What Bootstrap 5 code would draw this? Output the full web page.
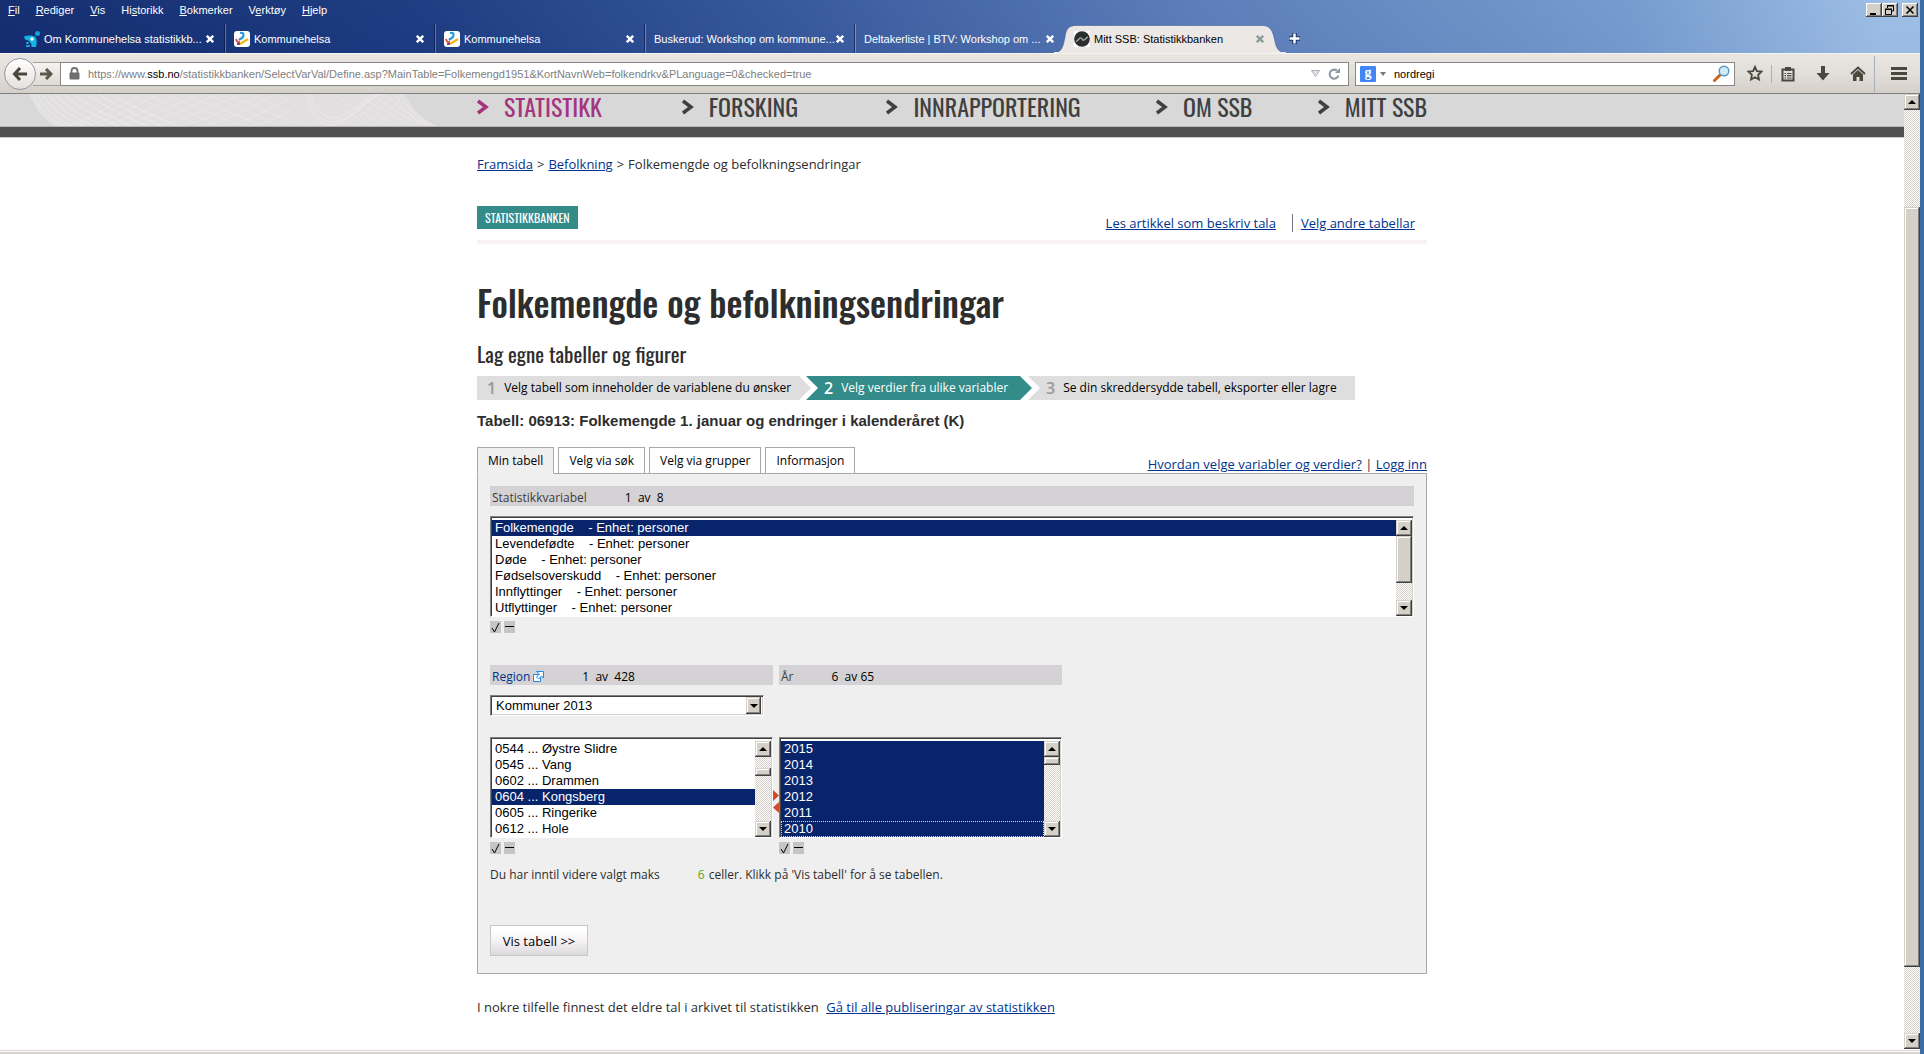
<!DOCTYPE html>
<html lang="nn">
<head>
<meta charset="utf-8">
<meta name="viewport" content="width=device-width, initial-scale=1">
<title>Mitt SSB: Statistikkbanken</title>
<link href="https://cdn.jsdelivr.net/npm/bootstrap@5.3.0/dist/css/bootstrap.min.css" rel="stylesheet">
<style>
  body { font-family: "Open Sans", "Noto Sans", sans-serif; font-size: 13px; line-height: 18px; color: #2d2d2d; background: #3a6ea5; padding-right: 4px; }
  a { color: #00338d; text-decoration: underline; }
  svg { display: block; flex: none; }
  button { border: 0; padding: 0; background: none; color: inherit; }

  /* browser frame */
  .frame-top { background: linear-gradient(175deg, rgba(255,255,255,.05), rgba(0,0,60,.08)), linear-gradient(98deg, #0a246a 0, #15367e 22%, #34579d 42%, #5b7fbc 62%, #7ba3d6 85%, #a6caf0 98%); font-family: "Liberation Sans", Arial, sans-serif; font-size: 11px; line-height: 14px; color: #fff; }
  .menu-row { height: 24px; padding: 3px 2px 0 8px; }
  .menu-row a { color: #fff; text-decoration: none; }
  .win-btn { width: 16px; height: 14px; background: #d4d0c8; box-shadow: inset -1px -1px #404040, inset 1px 1px #fff, inset -2px -2px #808080; }
  .tab-row { height: 29px; padding-left: 16px; }
  .tab-item { position: relative; width: 210px; padding: 0 11px 0 8px; height: 29px; border-right: 1px solid rgba(255,255,255,.3); box-shadow: inset -1px 0 rgba(0,0,40,.45); white-space: nowrap; }
  .tab-item.no-line { border-right-color: transparent; box-shadow: none; }
  .tab-item > * { position: relative; }
  .tab-current { color: #000; }
  .tab-current .tab-shape { position: absolute; left: -12px; top: 1px; }
  .tool-row { height: 41px; background: linear-gradient(#e9e6e2, #e2ded9 50%, #d4cfc9); border-top: 1px solid #f7f5f3; border-bottom: 1px solid #808080; padding: 0 13px 0 4px; font-family: "Liberation Sans", Arial, sans-serif; font-size: 11px; }
  .back-btn { width: 32px; height: 32px; border: 1px solid #8f97a3; border-radius: 50%; background: linear-gradient(#fff, #e4e1dd); z-index: 1; }
  .fwd-btn { width: 27px; height: 24px; margin-left: -3px; background: linear-gradient(#f6f4f2, #dedad5); border: 1px solid #a5a29e; border-width: 1px 0; }
  .field-box { height: 24px; background: #fff; border: 1px solid #868686; }
  .addr-text { color: #808080; white-space: nowrap; overflow: hidden; }
  .addr-text b { font-weight: 400; color: #000; }
  .find-box { width: 380px; margin-left: 6px; padding: 0 4px; }
  .find-box input { border: 0; outline: 0; padding: 0; font-size: 11px; color: #000; min-width: 0; }
  .g-tile { width: 16px; height: 16px; background: #4285f4; color: #fff; font: bold 14px/13px "Liberation Serif", serif; border-radius: 1px; }
  .tool-icons { padding-left: 12px; }
  .tool-sep { width: 1px; height: 18px; background: #aab0b8; }
  .tool-sep.tall { height: 36px; }

  /* scrollbars */
  .sbar { width: 16px; flex: none; background: repeating-conic-gradient(#fff 0 25%, #d4d0c8 0 50%) 0 0 / 2px 2px; }
  .sbar-btn, .sbar-thumb { background: #d4d0c8; box-shadow: inset -1px -1px #404040, inset 1px 1px #d4d0c8, inset -2px -2px #808080, inset 2px 2px #fff; }
  .sbar-btn { height: 16px; flex: none; display: flex; align-items: center; justify-content: center; }
  .tri-up, .tri-down { width: 0; height: 0; border: 4px solid transparent; }
  .tri-up { border-top: 0; border-bottom-color: #000; }
  .tri-down { border-bottom: 0; border-top-color: #000; }
  .grow-lead { flex: 97 0 0; } .grow-thumb { flex: 761 0 0; } .grow-tail { flex: 66 0 0; }
  .thumb-long { height: 47px; } .thumb-short { height: 8px; } .lead-short { height: 11px; }

  /* site */
  .site { background: #fff; }
  .site-head { background: #d8d8d8; height: 32px; position: relative; }
  .wave { position: absolute; left: 0; top: 0; }
  .head-rule { height: 12px; background: #505050; border-top: 1px solid #b8b8b8; border-bottom: 1px solid #c8c8c8; }
  .wrap { width: 100%; max-width: 950px; margin: 0 auto; }
  .main-nav a { font: 400 24px/25px Oswald, "Roboto Condensed", sans-serif; color: #404040; text-decoration: none; display: flex; gap: 15px; align-items: center; white-space: nowrap; }
  .main-nav a.chosen { color: #a5347f; }
  .nav-a { width: 205px; } .nav-b { width: 270px; } .nav-c { width: 162px; }
  .crumbs { padding-top: 17px; }
  .tag { background: #338c8a; color: #fff; font: 400 12px/23px Oswald, "Roboto Condensed", sans-serif; padding: 0 8px; }
  .head-line { height: 38px; border-bottom: 4px solid #f6f2f6; margin-top: 33px; }
  h1 { font: 500 36px/54px Oswald, "Roboto Condensed", sans-serif; margin: 31px 0 0; }
  h2 { font: 400 21px/30px Oswald, "Roboto Condensed", sans-serif; margin: 10px 0 7px; }
  .step { height: 24px; background: #dedede; color: #000; font-size: 12px; padding: 0 20px 0 10px; gap: 8px; white-space: nowrap; }
  .step b { font-size: 16px; font-weight: 600; color: #999; }
  .step-1 { width: 334px; clip-path: polygon(0 0, calc(100% - 12px) 0, 100% 50%, calc(100% - 12px) 100%, 0 100%); }
  .step-2 { width: 226px; margin-left: -5px; padding-left: 18px; background: #338c8a; color: #fff; clip-path: polygon(0 0, calc(100% - 12px) 0, 100% 50%, calc(100% - 12px) 100%, 0 100%, 12px 50%); }
  .step-2 b { color: #fff; }
  .step-3 { width: 327px; margin-left: -4px; padding-left: 18px; clip-path: polygon(0 0, 100% 0, 100% 100%, 0 100%, 12px 50%); }
  .table-name { font: bold 15px/20px "Liberation Sans", Arial, sans-serif; margin: 11px 0 16px; }
  .sheet-tabs { gap: 4px; margin-bottom: -1px; }
  .sheet-tab { border: 1px solid #a8a8a8; background: #fff; color: #000; font-size: 12px; height: 27px; padding: 0 10px; position: relative; }
  .sheet-tab.open { background: #efefef; border-bottom-color: #efefef; }
  .sheet { background: #efefef; border: 1px solid #a8a8a8; padding: 12px 12px 17px; }
  .var-head { background: #d4d2d4; height: 20px; font-size: 12px; padding: 3px 2px 0; color: #3c3c3c; display: flex; align-items: center; }
  .var-head output { color: #000; margin-left: 38px; white-space: pre; }
  .var-head a { text-decoration: none; display: flex; align-items: center; gap: 3px; }
  .lbox { height: 101px; border: 1px solid; border-color: #808080 #fff #fff #808080; box-shadow: inset 1px 1px #404040, inset -1px -1px #d4d0c8; padding: 3px 1px 0 1px; display: flex; background: #fff; }
  .lbox.first { margin-top: 10px; }
  .lbox select { flex: 1; min-width: 0; border: 0; outline: 0; padding: 0; height: 96px; overflow: hidden; font: 13px/16px "Liberation Sans", Arial, sans-serif; color: #000; background: #fff; border-radius: 0; scrollbar-width: none; }
  .lbox option { height: 16px; min-height: 16px; line-height: 16px; padding: 0 3px; }
  .lbox option:checked { background: #08246b linear-gradient(#08246b, #08246b); color: #fff; }
  .lbox option.cur { outline: 1px dotted #f3d99a; outline-offset: -1px; }
  .mini { width: 11px; height: 12px; background: #c6c4c6; display: flex; align-items: center; justify-content: center; }
  .minis { gap: 3px; margin-top: 4px; }
  .var-grid { display: grid; grid-template-columns: 283px 6px 283px; margin-top: 32px; }
  .combo { position: relative; width: 274px; height: 21px; margin: 10px 0 21px; border: 1px solid; border-color: #808080 #fff #fff #808080; box-shadow: inset 1px 1px #404040, inset -1px -1px #d4d0c8; padding: 2px 2px 2px 1px; display: flex; background: #fff; }
  .combo select { appearance: none; flex: 1; border: 0; background: none; padding: 0 4px; font: 13px/16px "Liberation Sans", Arial, sans-serif; color: #000; }
  .combo .sbar-btn { width: 15px; height: 17px; margin: -1px 0; pointer-events: none; }
  .swap { padding-top: 53px; }
  .note-line { font-size: 12px; margin-top: 12px; }
  .cells { color: #5fa50f; margin: 0 1px 0 38px; }
  .show-btn { margin-top: 41px; height: 31px; width: 98px; border: 1px solid #c6c6c6; background: linear-gradient(#fff 15%, #f6f2f6 50%, #dcdadc); color: #000; display: block; }
  .foot-strip { height: 5px; background: #d6d3ce; border-top: 1px solid #fff; box-shadow: inset 0 1px #d6d6ce, inset 0 2px #fff; }
</style>
</head>
<body class="d-flex flex-column min-vh-100">

<header class="frame-top">
  <div class="menu-row d-flex justify-content-between">
    <nav class="d-flex gap-3" aria-label="Meny">
      <a href="#"><u>F</u>il</a><a href="#"><u>R</u>ediger</a><a href="#"><u>V</u>is</a><a href="#">Hi<u>s</u>torikk</a><a href="#"><u>B</u>okmerker</a><a href="#">V<u>e</u>rktøy</a><a href="#"><u>H</u>jelp</a>
    </nav>
    <div class="d-flex">
      <button class="win-btn" aria-label="Minimer"><svg width="16" height="14"><path d="M4 10h6v2H4z"/></svg></button>
      <button class="win-btn" aria-label="Gjenopprett"><svg width="16" height="14" fill="none" stroke="#000"><path d="M5.500 5V2.500h6V8H10M5 3h7M3.500 6.500h6v5h-6zM3 6h7"/></svg></button>
      <button class="win-btn ms-1 me-0" aria-label="Lukk"><svg width="16" height="14" stroke="#000" stroke-width="1.600"><path d="M4.500 3.500l7 7m0-7l-7 7"/></svg></button>
    </div>
  </div>
  <div class="tab-row d-flex">
    <div class="tab-item d-flex align-items-center">
      <svg width="16" height="16" class="me-1"><path d="M0 5.500C4 4 9 4 11.500 6 13 8 13 12 12 16H7.500C8 12 5 9 1 8.500z" fill="#14b4e6"/><circle cx="13.500" cy="2.500" r="2.500" fill="#0fa0dc"/><circle cx="8" cy="8" r="1.700" fill="#fff"/><circle cx="3.500" cy="12" r="1.300" fill="#14b4e6"/><path d="M2 14h4v2H2z" fill="#0fa0dc"/></svg>
      <span>Om Kommunehelsa statistikkb...</span>
      <button class="ms-auto" aria-label="Lukk fane"><svg width="8" height="8" stroke="#fff" stroke-width="2.400"><path d="M.8.8l6.400 6.400m0-6.400L.8 7.200"/></svg></button>
    </div>
    <div class="tab-item d-flex align-items-center">
      <svg width="16" height="16" class="me-1"><rect width="16" height="16" rx="3" fill="#fff"/><path d="M2 8q1 4 4 3" stroke="#e8473f" stroke-width="2" fill="none"/><path d="M6 2q5-1 3 4L5 9" stroke="#2a9ad6" stroke-width="2.200" fill="none"/><path d="M6 13l8-5" stroke="#f3b81f" stroke-width="2.500"/><path d="M3 13h3" stroke="#6b4fa0" stroke-width="2"/></svg>
      <span>Kommunehelsa</span>
      <button class="ms-auto" aria-label="Lukk fane"><svg width="8" height="8" stroke="#fff" stroke-width="2.400"><path d="M.8.8l6.400 6.400m0-6.400L.8 7.200"/></svg></button>
    </div>
    <div class="tab-item d-flex align-items-center">
      <svg width="16" height="16" class="me-1"><rect width="16" height="16" rx="3" fill="#fff"/><path d="M2 8q1 4 4 3" stroke="#e8473f" stroke-width="2" fill="none"/><path d="M6 2q5-1 3 4L5 9" stroke="#2a9ad6" stroke-width="2.200" fill="none"/><path d="M6 13l8-5" stroke="#f3b81f" stroke-width="2.500"/><path d="M3 13h3" stroke="#6b4fa0" stroke-width="2"/></svg>
      <span>Kommunehelsa</span>
      <button class="ms-auto" aria-label="Lukk fane"><svg width="8" height="8" stroke="#fff" stroke-width="2.400"><path d="M.8.8l6.400 6.400m0-6.400L.8 7.200"/></svg></button>
    </div>
    <div class="tab-item d-flex align-items-center">
      <span>Buskerud: Workshop om kommune...</span>
      <button class="ms-auto" aria-label="Lukk fane"><svg width="8" height="8" stroke="#fff" stroke-width="2.400"><path d="M.8.8l6.400 6.400m0-6.400L.8 7.200"/></svg></button>
    </div>
    <div class="tab-item no-line d-flex align-items-center">
      <span>Deltakerliste | BTV: Workshop om ...</span>
      <button class="ms-auto" aria-label="Lukk fane"><svg width="8" height="8" stroke="#fff" stroke-width="2.400"><path d="M.8.8l6.400 6.400m0-6.400L.8 7.200"/></svg></button>
    </div>
    <div class="tab-item no-line tab-current d-flex align-items-center">
      <svg class="tab-shape" width="232" height="28"><path d="M0 28C8 27 9 22 11 12 12 4 15 .5 22 .5H208C215 .5 218 4 220 12c2 10 3 15 12 16z" fill="#ebe8e5" stroke="#33508a" stroke-opacity=".5"/><path d="M0 28h232v-1H0z" fill="#ebe8e5"/></svg>
      <svg width="16" height="16" class="me-1"><rect width="16" height="16" fill="#fff"/><circle cx="8" cy="8" r="7.800" fill="#2a2e2c"/><path d="M2 10.500c2.500-.5 3-4 5-3.500s.5 2.500 2.500 2.200S12 6.500 14 6" stroke="#b8bcba" stroke-width="1.200" fill="none"/></svg>
      <span>Mitt SSB: Statistikkbanken</span>
      <button class="ms-auto" aria-label="Lukk fane"><svg width="8" height="8" stroke="#8e9a9c" stroke-width="2.400"><path d="M.8.8l6.400 6.400m0-6.400L.8 7.200"/></svg></button>
    </div>
    <button class="ms-2 ps-1" aria-label="Ny fane"><svg width="13" height="13"><path d="M6.500 1v11M1 6.500h11" stroke="#1f3361" stroke-width="4.500"/><path d="M6.500 1.500v10M1.500 6.500h10" stroke="#fff" stroke-width="2.400"/></svg></button>
  </div>
</header>

<div class="tool-row d-flex align-items-center">
  <button class="back-btn d-flex align-items-center justify-content-center" aria-label="Tilbake"><svg width="16" height="14" fill="none" stroke="#4a483c" stroke-width="3"><path d="M8 1L2.500 7 8 13M3 7h12"/></svg></button>
  <button class="fwd-btn d-flex align-items-center justify-content-center" aria-label="Fram"><svg width="13" height="12" fill="none" stroke="#5a584c" stroke-width="3"><path d="M6 1l5 5-5 5M10 6H0"/></svg></button>
  <div class="field-box d-flex align-items-center flex-grow-1 px-2">
    <svg width="11" height="13" class="me-2"><path d="M2.500 6V4a3 3 0 016 0v2" fill="none" stroke="#6f6f6f" stroke-width="1.800"/><rect x=".5" y="5.500" width="10" height="7" rx="1" fill="#6f6f6f"/></svg>
    <div class="addr-text flex-grow-1">https://www.<b>ssb.no</b>/statistikkbanken/SelectVarVal/Define.asp?MainTable=Folkemengd1951&amp;KortNavnWeb=folkendrkv&amp;PLanguage=0&amp;checked=true</div>
    <svg width="9" height="7" class="me-2"><path d="M.5.5h8l-4 6z" fill="#dfe3ea" stroke="#a9b1bd"/></svg>
    <button aria-label="Last på nytt"><svg width="12" height="12"><path d="M10.500 7.500A4.500 4.500 0 119 2.600" fill="none" stroke="#8b97a4" stroke-width="2"/><path d="M7 5h5V0z" fill="#8b97a4"/></svg></button>
  </div>
  <div class="field-box find-box d-flex align-items-center">
    <span class="g-tile text-center">g</span>
    <svg width="6" height="4" class="mx-1"><path d="M0 0h6L3 4z" fill="#777"/></svg>
    <input class="flex-grow-1 ms-1" type="text" value="nordregi" aria-label="Søk">
    <svg width="17" height="17"><path d="M1.500 15.500L7 10" stroke="#c8641e" stroke-width="3" stroke-linecap="round"/><circle cx="11" cy="6" r="4.800" fill="#cfeaf8" stroke="#5f94c4" stroke-width="1.400"/></svg>
  </div>
  <div class="tool-icons d-flex align-items-center">
    <button class="me-1" aria-label="Bokmerk"><svg width="16" height="17" viewBox="0 0 16 17"><path d="M8 1.800l1.900 4.300 4.600.5-3.400 3.200.9 4.700L8 12.200l-4 2.300.9-4.700L1.500 6.600l4.600-.5z" fill="none" stroke="#4a483c" stroke-width="1.800"/></svg></button>
    <span class="tool-sep mx-1"></span>
    <button class="ms-1" aria-label="Bokmerker"><svg width="16" height="16"><path d="M2.500 3.500h11v11h-11z" fill="none" stroke="#4a483c" stroke-width="2"/><path d="M5 1h6v4H5z" fill="#4a483c"/><path d="M4.500 7.500H6M7 7.500h4.500M4.500 9.700H6M7 9.700h4.500M4.500 12H6M7 12h4.500" stroke="#4a483c" stroke-width="1.200"/></svg></button>
    <button class="ms-3 px-1" aria-label="Nedlastinger"><svg width="14" height="15"><path d="M5 0h4v7h4.500L7 14.500.5 7H5z" fill="#4a483c"/></svg></button>
    <button class="ms-3" aria-label="Hjem"><svg width="16" height="15"><path d="M1 8l7-6.500L15 8" fill="none" stroke="#4a483c" stroke-width="2"/><path d="M3 8.500l5-4.500 5 4.500V15H9.500v-4h-3v4H3z" fill="#4a483c"/></svg></button>
    <span class="tool-sep tall ms-2 me-3"></span>
    <button aria-label="Meny"><svg width="16" height="13"><path d="M0 1.500h16M0 6.500h16M0 11.500h16" stroke="#4a483c" stroke-width="3"/></svg></button>
  </div>
</div>

<div class="d-flex flex-grow-1">
  <div class="site flex-grow-1">
    <div class="site-head">
      <svg class="wave" width="450" height="32" fill="none" stroke="#fff">
        <path d="M30 0C38 18 46 28 58 32H436C418 24 410 12 404 0z" fill="#f4eef2" fill-opacity=".3" stroke="none"/>
        <g stroke-opacity=".35"><path d="M30 0C38 18 46 28 58 32M33 0c8 18 18 28 32 32M37 0c8 16 20 26 36 32M42 0c8 14 24 26 42 32M48 0c10 14 26 24 46 32M55 0c10 12 30 24 50 32M64 0c12 12 32 22 54 32M74 0c14 12 34 22 58 32M86 0c14 10 38 22 62 32M98 0c16 10 40 22 64 32M110 0c16 10 44 22 68 32"/></g>
        <g stroke-opacity=".2"><path d="M58 32C90 30 110 10 128 0M66 32C100 30 120 10 142 0M80 32c34-4 56-22 80-32M96 32c34-4 60-22 84-32M114 32c34-4 60-22 84-32M134 32c34-6 60-22 86-32M156 32c34-6 56-22 86-32M178 32c34-6 56-22 84-32M200 32c34-6 50-20 74-30M224 32c30-6 44-18 58-24M250 32c20-4 30-10 40-16"/><path d="M128 0c30 12 50 22 74 32M146 0c30 12 50 22 74 32M164 0c30 12 52 22 78 32M184 0c30 12 54 22 80 32M206 0c30 12 50 20 72 32M228 0c26 12 44 20 68 30M252 0c20 10 34 18 50 28M276 0c14 8 24 14 36 24"/></g>
        <g stroke-opacity=".5" stroke="#f8eef4"><path d="M306 0c4 20 12 30 24 31 22 0 36-30 54-31M308 0c4 18 12 27 24 28 20 0 34-27 50-28M311 0c4 16 12 23 22 24 18 0 30-22 44-24M404 0c6 12 14 24 32 32M400 0c6 14 18 26 34 32M395 0c6 14 16 24 34 32"/></g>
        <g stroke-opacity=".2"><path d="M322 0c14 10 30 22 48 32M334 0c14 10 34 22 52 32M346 0c14 10 34 22 54 32M358 0c14 10 36 22 54 32M370 0c14 10 34 22 52 32M384 0c12 10 26 22 42 32M340 32c20-8 34-20 46-32M358 32c18-8 26-20 36-32M378 32c10-8 16-18 22-28"/></g>
      </svg>
      <nav class="wrap main-nav d-flex" aria-label="Hovudmeny">
        <a class="nav-a chosen" href="#"><svg width="12" height="18" viewBox="0 0 12 18"><path d="M1 3l8 6-8 6" fill="none" stroke="currentColor" stroke-width="3.500"/></svg>STATISTIKK</a>
        <a class="nav-a" href="#"><svg width="12" height="18" viewBox="0 0 12 18"><path d="M1 3l8 6-8 6" fill="none" stroke="currentColor" stroke-width="3.500"/></svg>FORSKING</a>
        <a class="nav-b" href="#"><svg width="12" height="18" viewBox="0 0 12 18"><path d="M1 3l8 6-8 6" fill="none" stroke="currentColor" stroke-width="3.500"/></svg>INNRAPPORTERING</a>
        <a class="nav-c" href="#"><svg width="12" height="18" viewBox="0 0 12 18"><path d="M1 3l8 6-8 6" fill="none" stroke="currentColor" stroke-width="3.500"/></svg>OM SSB</a>
        <a href="#"><svg width="12" height="18" viewBox="0 0 12 18"><path d="M1 3l8 6-8 6" fill="none" stroke="currentColor" stroke-width="3.500"/></svg>MITT SSB</a>
      </nav>
    </div>
    <div class="head-rule"></div>

    <main class="wrap">
      <div class="crumbs d-flex gap-1"><a href="#">Framsida</a><span>&gt;</span><a href="#">Befolkning</a><span>&gt;</span><span>Folkemengde og befolkningsendringar</span></div>

      <div class="head-line d-flex justify-content-between align-items-start">
        <span class="tag">STATISTIKKBANKEN</span>
        <div class="d-flex pt-2 pe-2 me-1"><a href="#">Les artikkel som beskriv tala</a><span class="border-start border-secondary ms-3 me-2"></span><a href="#">Velg andre tabellar</a></div>
      </div>

      <h1>Folkemengde og befolkningsendringar</h1>
      <h2>Lag egne tabeller og figurer</h2>

      <div class="d-flex">
        <div class="step step-1 d-flex align-items-center"><b>1</b>Velg tabell som inneholder de variablene du ønsker</div>
        <div class="step step-2 d-flex align-items-center"><b>2</b>Velg verdier fra ulike variabler</div>
        <div class="step step-3 d-flex align-items-center"><b>3</b>Se din skreddersydde tabell, eksporter eller lagre</div>
      </div>

      <p class="table-name">Tabell: 06913: Folkemengde 1. januar og endringer i kalenderåret (K)</p>

      <div class="d-flex justify-content-between align-items-end">
        <div class="sheet-tabs d-flex">
          <button class="sheet-tab open">Min tabell</button><button class="sheet-tab">Velg via søk</button><button class="sheet-tab">Velg via grupper</button><button class="sheet-tab">Informasjon</button>
        </div>
        <div><a href="#">Hvordan velge variabler og verdier?</a> | <a href="#">Logg inn</a></div>
      </div>

      <form class="sheet" onsubmit="return false">
        <div class="var-head"><label for="statvar">Statistikkvariabel</label><output>1  av  8</output></div>
        <div class="lbox first">
          <select id="statvar" multiple size="6">
            <option selected>Folkemengde&nbsp;&nbsp;&nbsp; - Enhet: personer</option>
            <option>Levendefødte&nbsp;&nbsp;&nbsp; - Enhet: personer</option>
            <option>Døde&nbsp;&nbsp;&nbsp; - Enhet: personer</option>
            <option>Fødselsoverskudd&nbsp;&nbsp;&nbsp; - Enhet: personer</option>
            <option>Innflyttinger&nbsp;&nbsp;&nbsp; - Enhet: personer</option>
            <option>Utflyttinger&nbsp;&nbsp;&nbsp; - Enhet: personer</option>
          </select>
          <div class="sbar d-flex flex-column"><div class="sbar-btn"><i class="tri-up"></i></div><div class="sbar-thumb thumb-long"></div><div class="sbar-btn mt-auto"><i class="tri-down"></i></div></div>
        </div>
        <div class="minis d-flex"><button class="mini" aria-label="Vel alle"><svg width="9" height="11" fill="none" stroke="#000"><path d="M1 6l2.500 4L8 1"/></svg></button><button class="mini" aria-label="Fjern alle"><svg width="9" height="2"><path d="M0 0h9v1H0z"/></svg></button></div>

        <div class="var-grid">
          <div class="var-head"><a href="#">Region <svg width="11" height="11"><path d="M.5 3.500h7v7h-7z" fill="#fff" stroke="#1e8be6"/><path d="M3.500.5h7v6.500l-2-2-3 3-2-2 3-3z" fill="#fff" stroke="#1e8be6"/></svg></a><output>1  av  428</output></div>
          <div></div>
          <div class="var-head"><label for="year">År</label><output>6  av 65</output></div>

          <div class="combo"><select aria-label="Gruppering"><option>Kommuner 2013</option></select><div class="sbar-btn"><i class="tri-down"></i></div></div>
          <div></div><div></div>

          <div class="lbox">
            <select aria-label="Region" multiple size="6">
              <option>0544 ... Øystre Slidre</option><option>0545 ... Vang</option><option>0602 ... Drammen</option><option selected>0604 ... Kongsberg</option><option>0605 ... Ringerike</option><option>0612 ... Hole</option>
            </select>
            <div class="sbar d-flex flex-column"><div class="sbar-btn"><i class="tri-up"></i></div><div class="lead-short"></div><div class="sbar-thumb thumb-short"></div><div class="sbar-btn mt-auto"><i class="tri-down"></i></div></div>
          </div>
          <svg class="swap" width="6" height="76" viewBox="0 0 6 23"><path d="M0 0l6 5.500L0 11zM6 12L0 17.500 6 23z" fill="#d04a2a"/></svg>
          <div class="lbox">
            <select id="year" multiple size="6">
              <option selected>2015</option><option selected>2014</option><option selected>2013</option><option selected>2012</option><option selected>2011</option><option selected class="cur">2010</option>
            </select>
            <div class="sbar d-flex flex-column"><div class="sbar-btn"><i class="tri-up"></i></div><div class="sbar-thumb thumb-short"></div><div class="sbar-btn mt-auto"><i class="tri-down"></i></div></div>
          </div>

          <div class="minis d-flex"><button class="mini" aria-label="Vel alle"><svg width="9" height="11" fill="none" stroke="#000"><path d="M1 6l2.500 4L8 1"/></svg></button><button class="mini" aria-label="Fjern alle"><svg width="9" height="2"><path d="M0 0h9v1H0z"/></svg></button></div>
          <div></div>
          <div class="minis d-flex"><button class="mini" aria-label="Vel alle"><svg width="9" height="11" fill="none" stroke="#000"><path d="M1 6l2.500 4L8 1"/></svg></button><button class="mini" aria-label="Fjern alle"><svg width="9" height="2"><path d="M0 0h9v1H0z"/></svg></button></div>
        </div>

        <div class="note-line">Du har inntil videre valgt maks<span class="cells">6</span> celler. Klikk på 'Vis tabell' for å se tabellen.</div>
        <button class="show-btn">Vis tabell &gt;&gt;</button>
      </form>

      <p class="mb-0 mt-4 pb-4">I nokre tilfelle finnest det eldre tal i arkivet til statistikken <a class="ms-1" href="#">Gå til alle publiseringar av statistikken</a></p>
    </main>
  </div>

  <div class="sbar d-flex flex-column"><div class="sbar-btn"><i class="tri-up"></i></div><div class="grow-lead"></div><div class="sbar-thumb grow-thumb"></div><div class="grow-tail"></div><div class="sbar-btn"><i class="tri-down"></i></div></div>
</div>
<div class="foot-strip"></div>

<script src="https://cdn.jsdelivr.net/npm/bootstrap@5.3.0/dist/js/bootstrap.bundle.min.js"></script>
</body>
</html>
